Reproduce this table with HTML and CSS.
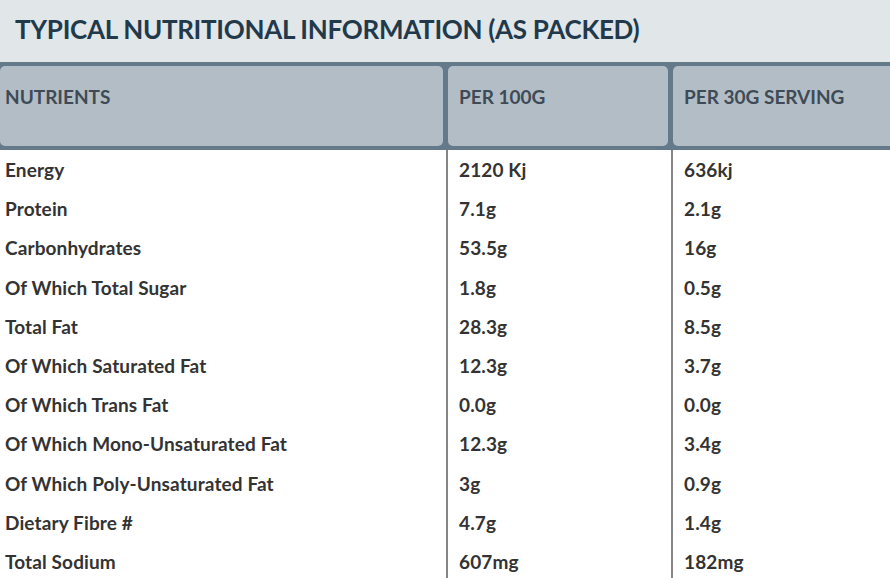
FILE: index.html
```html
<!DOCTYPE html>
<html lang="en">
<head>
<meta charset="utf-8">
<title>Typical Nutritional Information</title>
<link rel="stylesheet" href="styles.css">
</head>
<body>
<div class="panel">
  <h2 class="title">TYPICAL NUTRITIONAL INFORMATION (AS PACKED)</h2>
  <div class="head">
    <div class="hcell">NUTRIENTS</div>
    <div class="hcell">PER 100G</div>
    <div class="hcell">PER 30G SERVING</div>
  </div>
  <div class="body">
    <div class="row"><div class="cell">Energy</div><div class="cell">2120 Kj</div><div class="cell">636kj</div></div>
    <div class="row"><div class="cell">Protein</div><div class="cell">7.1g</div><div class="cell">2.1g</div></div>
    <div class="row"><div class="cell">Carbonhydrates</div><div class="cell">53.5g</div><div class="cell">16g</div></div>
    <div class="row"><div class="cell">Of Which Total Sugar</div><div class="cell">1.8g</div><div class="cell">0.5g</div></div>
    <div class="row"><div class="cell">Total Fat</div><div class="cell">28.3g</div><div class="cell">8.5g</div></div>
    <div class="row"><div class="cell">Of Which Saturated Fat</div><div class="cell">12.3g</div><div class="cell">3.7g</div></div>
    <div class="row"><div class="cell">Of Which Trans Fat</div><div class="cell">0.0g</div><div class="cell">0.0g</div></div>
    <div class="row"><div class="cell">Of Which Mono-Unsaturated Fat</div><div class="cell">12.3g</div><div class="cell">3.4g</div></div>
    <div class="row"><div class="cell">Of Which Poly-Unsaturated Fat</div><div class="cell">3g</div><div class="cell">0.9g</div></div>
    <div class="row"><div class="cell">Dietary Fibre #</div><div class="cell">4.7g</div><div class="cell">1.4g</div></div>
    <div class="row"><div class="cell">Total Sodium</div><div class="cell">607mg</div><div class="cell">182mg</div></div>
  </div>
</div>
</body>
</html>
```
FILE: styles.css
```css
html, body {
  margin: 0;
  padding: 0;
  background: #ffffff;
}
body {
  font-family: Lato, "Open Sans", "Liberation Sans", sans-serif;
  font-weight: 700;
  overflow: hidden;
}
.panel {
  width: 894px;
}
.title {
  margin: 0;
  height: 62px;
  box-sizing: border-box;
  padding: 13px 0 0 15px;
  background: #e1e6e9;
  color: #22394b;
  font-size: 26px;
  line-height: 32px;
  font-weight: 700;
  letter-spacing: -0.3px;
}
.head {
  display: grid;
  grid-template-columns: 443px 220px 1fr;
  column-gap: 5px;
  background: #64798a;
  padding: 4px 0;
}
.hcell {
  background: #b3bdc6;
  border-radius: 5px;
  height: 80px;
  box-sizing: border-box;
  padding: 19px 11px 0;
  color: #3e4b56;
  font-size: 19px;
  line-height: 24px;
}
.hcell:first-child {
  padding-left: 5px;
}
.row {
  display: grid;
  grid-template-columns: 446px 225px 1fr;
  height: 39.2px;
}
.cell {
  display: flex;
  align-items: center;
  padding: 0 11px;
  color: #333333;
  font-size: 19px;
  letter-spacing: 0.12px;
}
.cell:first-child {
  padding-left: 5px;
}
.cell + .cell {
  border-left: 2px solid #858585;
}
```
